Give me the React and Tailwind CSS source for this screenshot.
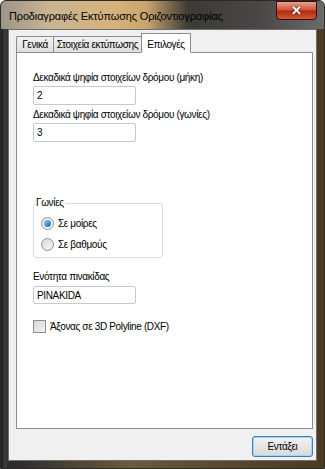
import React from "react";

const font = { fontFamily: '"Liberation Sans", Tahoma, sans-serif' };

export default function App() {
  return (
    <div
      className="w-[325px] h-[469px] flex flex-col border border-[#2a2a2a] rounded-t-[6px] overflow-hidden"
      style={{
        ...font,
        background:
          "linear-gradient(to right, #1a1a1a 0px, #3d3d3d 4px, #2a2a2a 8px, #6b5a3e 40%, #5a4630 70%, #4a3a22 100%)",
      }}
    >
      {/* Title bar */}
      <div
        className="h-[28px] flex items-start relative shrink-0"
        style={{
          background:
            "linear-gradient(to right, #9c9588 0%, #c9b592 15%, #d7b27a 35%, #c9a56e 45%, #3c3a36 58%, #4a4846 80%, #6a6a68 100%)",
        }}
      >
        <span className="mt-[8px] ml-[8px] text-[11px] text-black leading-[15px] tracking-[-0.15px]">
          Προδιαγραφές Εκτύπωσης Οριζοντιογραφίας
        </span>
        <div className="absolute right-[7px] top-0 w-[41px] h-[19px] rounded-b-[4px] border border-[#3b0b05] flex items-center justify-center"
          style={{ background: "linear-gradient(to bottom, #e7a392 0%, #d0553c 45%, #b22a10 55%, #d05a36 100%)" }}>
          <span className="text-white text-[13px] font-bold leading-none" style={{ textShadow: "0 0 2px #000" }}>✕</span>
        </div>
      </div>

      {/* Client area */}
      <div className="flex-1 mx-[7px] mb-[7px] border border-[#6e6e6e] bg-[#f0f0f0] flex flex-col pt-[3px] text-[10px] tracking-[-0.35px]">
        {/* Tabs */}
        <div className="flex items-end pl-[7px] h-[20px] relative z-10 text-black">
          <div className="w-[37px] h-[17px] border border-[#898c95] border-r-0 rounded-tl-[2px] bg-gradient-to-b from-[#f2f2f2] to-[#e0e0e0] flex items-center justify-center">Γενικά</div>
          <div className="w-[89px] h-[17px] border border-[#898c95] rounded-tr-[2px] bg-gradient-to-b from-[#f2f2f2] to-[#e0e0e0] flex items-center justify-center">Στοιχεία εκτύπωσης</div>
          <div className="w-[50px] h-[20px] -ml-[1px] border border-[#898c95] border-b-white bg-white flex justify-center items-start pt-[3px]">Επιλογές</div>
        </div>
        <div className="mx-[7px] -mt-[1px] mr-[3px] h-[377px] border border-[#898c95] bg-white text-black pl-[16px] pt-[19px]">
          <div className="leading-[12px]">Δεκαδικά ψηφία στοιχείων δρόμου (μήκη)</div>
          <div className="mt-[2px] w-[103px] h-[19px] border border-[#c5c9d1] rounded-[2px] pl-[3px] flex items-center">2</div>
          <div className="mt-[4px] leading-[12px]">Δεκαδικά ψηφία στοιχείων δρόμου (γωνίες)</div>
          <div className="mt-[2px] w-[103px] h-[19px] border border-[#c5c9d1] rounded-[2px] pl-[3px] flex items-center">3</div>

          <div className="mt-[61px] w-[130px] h-[55px] border border-[#d5dfe5] rounded-[3px] relative">
            <span className="absolute -top-[7px] left-[2px] bg-white pr-[1px] leading-[12px]">Γωνίες</span>
            <div className="flex items-center mt-[12px] ml-[7px]">
              <span className="w-[13px] h-[13px] rounded-full border border-[#8e8f8f] bg-gradient-to-br from-[#e6e6e6] to-[#fafafa] flex items-center justify-center">
                <span className="w-[7px] h-[7px] rounded-full bg-gradient-to-br from-[#8fd0f5] to-[#0d5e9c]" />
              </span>
              <span className="ml-[4px]">Σε μοίρες</span>
            </div>
            <div className="flex items-center mt-[6px] ml-[7px]">
              <span className="w-[13px] h-[13px] rounded-full border border-[#8e8f8f] bg-gradient-to-br from-[#d9d9d9] to-[#f7f7f7]" />
              <span className="ml-[4px]">Σε βαθμούς</span>
            </div>
          </div>

          <div className="mt-[13px] leading-[12px]">Ενότητα πινακίδας</div>
          <div className="mt-[3px] w-[103px] h-[18px] border border-[#c5c9d1] rounded-[2px] pl-[3px] flex items-center">PINAKIDA</div>

          <div className="mt-[15px] flex items-center">
            <span className="w-[13px] h-[13px] border border-[#8e8f8f] bg-gradient-to-br from-[#d6d6d6] to-[#f5f5f5]" />
            <span className="ml-[4px]">Άξονας σε 3D Polyline (DXF)</span>
          </div>
        </div>
        <div className="flex justify-end mt-[7px] mr-[3px]">
          <div className="w-[61px] h-[21px] rounded-[3px] border border-[#3c7fb1] bg-gradient-to-b from-[#f2f2f2] to-[#d9d9d9] flex items-center justify-center"
            style={{ boxShadow: "inset 0 0 0 1px #9fd5f6" }}>
            Εντάξει
          </div>
        </div>
      </div>
    </div>
  );
}
